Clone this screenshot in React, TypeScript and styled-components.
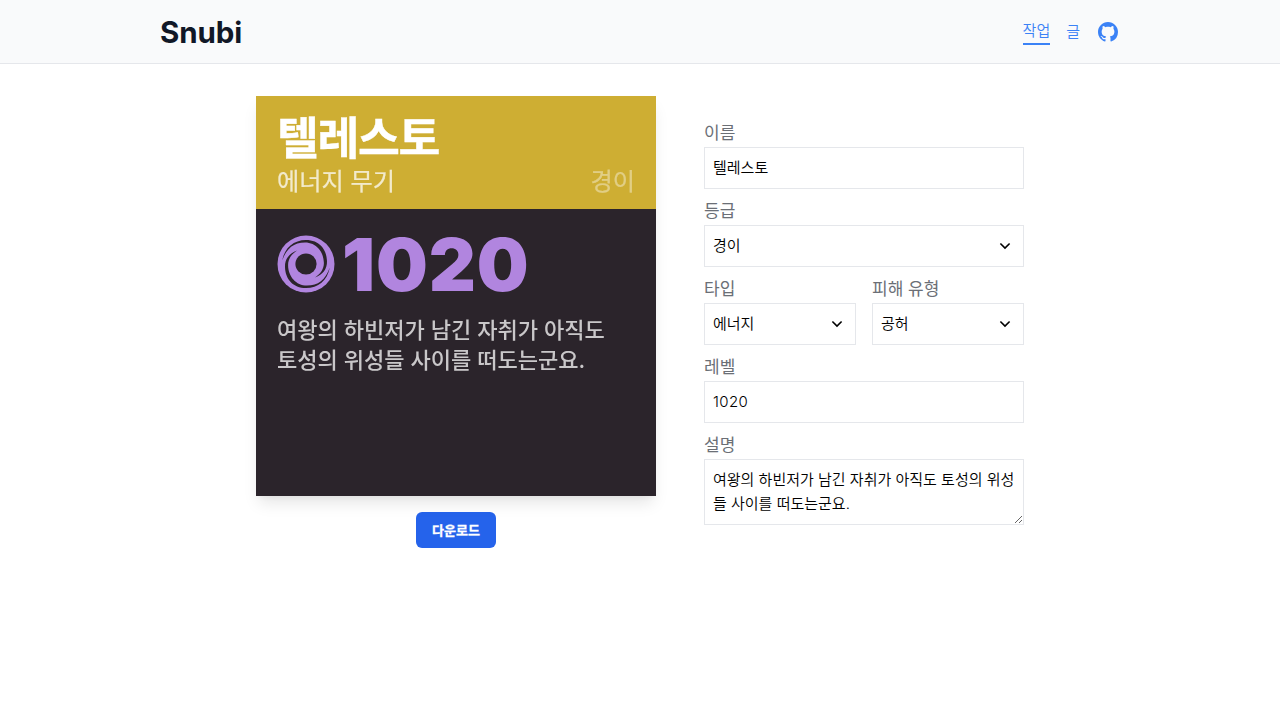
import React from "react";
import styled, { createGlobalStyle } from "styled-components";

const GlobalStyle = createGlobalStyle`
  *, *::before, *::after { box-sizing: border-box; }
  body { margin: 0; background: #fff; color: #000; font-family: Inter, "Noto Sans CJK KR", sans-serif; font-size: 16px; line-height: 24px; }
`;

const Header = styled.header`
  height: 64px;
  background: #f9fafb;
  border-bottom: 1px solid #e5e7eb;
`;
const HeaderInner = styled.div`
  width: 960px;
  height: 63px;
  margin: 0 auto;
  display: flex;
  align-items: center;
  justify-content: space-between;
`;
const Brand = styled.h1`
  margin: 0;
  color: #111827;
  font-size: 29.5px;
  line-height: 36px;
  font-weight: 700;
  letter-spacing: -0.1px;
`;
const Nav = styled.nav`
  display: flex;
  align-items: center;
  gap: 16px;
  padding-right: 2px;
`;
const NavLink = styled.a<{ $active?: boolean }>`
  color: #3b82f6;
  font-size: 15px;
  font-weight: 350;
  line-height: 24px;
  border-bottom: ${(p) => (p.$active ? "2px solid #3b82f6" : "0")};
`;
const GithubIcon = styled.svg`
  display: block;
  width: 20px;
  height: 20px;
  margin-left: 2px;
  fill: #3b82f6;
`;

const Main = styled.main`
  width: 768px;
  margin: 32px auto 0;
  display: flex;
  gap: 48px;
`;
const Preview = styled.section`
  width: 400px;
  display: flex;
  flex-direction: column;
  align-items: center;
  gap: 16px;
`;
const Card = styled.article`
  width: 400px;
  height: 400px;
  background: #2b242b;
  box-shadow: 0 10px 15px -3px rgba(0, 0, 0, 0.1), 0 4px 6px -2px rgba(0, 0, 0, 0.05);
  will-change: transform;
`;
const CardTop = styled.div`
  height: 113px;
  padding: 15px 21px 0 21px;
  background: #ceae33;
  color: #fff;
`;
const ItemName = styled.h2`
  margin: 0;
  font-size: 45.5px;
  line-height: 56px;
  font-weight: 700;
  letter-spacing: -1.4px;
  -webkit-text-stroke: 0.4px #fff;
`;
const ItemMeta = styled.div`
  display: flex;
  justify-content: space-between;
  font-size: 24.2px;
  font-weight: 400;
  line-height: 30px;
  -webkit-text-stroke: 0.2px #fff;
`;
const ItemType = styled.span`
  opacity: 0.75;
`;
const ItemTier = styled.span`
  opacity: 0.4;
`;
const Power = styled.div`
  height: 110px;
  padding: 0 21px;
  display: flex;
  align-items: center;
  gap: 7px;
  color: #b185df;
  font-size: 73px;
  line-height: 80px;
  font-weight: 900;
  letter-spacing: 0.9px;
`;
const PowerValue = styled.span`
  padding-top: 2px;
`;
const VoidIcon = styled.svg`
  width: 58px;
  height: 58px;
  flex: none;
`;
const Flavor = styled.p`
  margin: -3px 0 0;
  padding: 0 21px;
  color: #c9c7c9;
  font-size: 22.05px;
  font-weight: 500;
  line-height: 29.5px;
  word-break: keep-all;
`;
const Download = styled.button`
  width: 80px;
  height: 36px;
  border: 0;
  border-radius: 6px;
  padding: 0 0 1px;
  background: #2563eb;
  color: #fff;
  font: 700 13px/20px Inter, "Noto Sans CJK KR", sans-serif;
  -webkit-text-stroke: 0.3px #fff;
`;

const Form = styled.form`
  width: 320px;
  padding-top: 23px;
  display: flex;
  flex-direction: column;
  gap: 8px;
`;
const Pair = styled.div`
  display: grid;
  grid-template-columns: 1fr 1fr;
  gap: 16px;
`;
const Field = styled.label`
  display: block;
  color: #6b6f76;
`;
const Caption = styled.span`
  display: block;
  height: 28px;
  font-size: 17px;
  line-height: 28px;
`;
const controlFont = `350 15px/24px Inter, "Noto Sans CJK KR", sans-serif`;
const Input = styled.input<{ $numeric?: boolean }>`
  display: block;
  width: 100%;
  height: 42px;
  padding: ${(p) => (p.$numeric ? "7px 8px 9px" : "6px 8px 10px")};
  border: 1px solid #e5e7eb;
  border-radius: 0;
  background: #fff;
  color: #000;
  font: ${controlFont};
  letter-spacing: ${(p) => (p.$numeric ? "0.4px" : "normal")};
  outline: 0;
`;
const SelectBox = styled.span`
  display: flex;
  align-items: center;
  justify-content: space-between;
  height: 42px;
  padding: 0 12px 0 8px;
  border: 1px solid #e5e7eb;
  color: #000;
  font: ${controlFont};
`;
const Chevron = styled.svg`
  width: 12px;
  height: 8px;
`;
const TextArea = styled.textarea`
  display: block;
  width: 100%;
  height: 66px;
  padding: 8px;
  border: 1px solid #e5e7eb;
  background: #fff;
  color: #000;
  font: ${controlFont};
  resize: both;
  overflow: auto;
  outline: 0;
`;

function Select({ value }: { value: string }) {
  return (
    <SelectBox>
      {value}
      <Chevron viewBox="0 0 12 8" fill="none" stroke="#000" strokeWidth="1.6">
        <path d="M1.4 1.5 6 6.1l4.6-4.6" />
      </Chevron>
    </SelectBox>
  );
}

const crescent =
  "M5.2 25.5C7.5 12.5 17 4.9 29 4.9C42 4.9 49.8 14 50 26C50.2 34 46 39.5 38 42.5C43.5 39 46.9 34 46.9 28C46.9 16.5 39 7.4 28 7.4C17 7.4 9.5 13 5.2 25.5Z";

const flavor = "여왕의 하빈저가 남긴 자취가 아직도 토성의 위성들 사이를 떠도는군요.";

export default function App() {
  return (
    <>
      <GlobalStyle />
      <Header>
        <HeaderInner>
          <Brand>Snubi</Brand>
          <Nav>
            <NavLink $active>작업</NavLink>
            <NavLink>글</NavLink>
            <GithubIcon viewBox="0 0 16 16">
              <path d="M8 0C3.58 0 0 3.58 0 8c0 3.54 2.29 6.53 5.47 7.59.4.07.55-.17.55-.38 0-.19-.01-.82-.01-1.49-2.01.37-2.53-.49-2.69-.94-.09-.23-.48-.94-.82-1.13-.28-.15-.68-.52-.01-.53.63-.01 1.08.58 1.23.82.72 1.21 1.87.87 2.33.66.07-.52.28-.87.51-1.07-1.78-.2-3.64-.89-3.64-3.95 0-.87.31-1.59.82-2.15-.08-.2-.36-1.02.08-2.12 0 0 .67-.21 2.2.82.64-.18 1.32-.27 2-.27s1.36.09 2 .27c1.53-1.04 2.2-.82 2.2-.82.44 1.1.16 1.92.08 2.12.51.56.82 1.27.82 2.15 0 3.07-1.87 3.75-3.65 3.95.29.25.54.73.54 1.48 0 1.07-.01 1.93-.01 2.2 0 .21.15.46.55.38A8.01 8.01 0 0 0 16 8c0-4.42-3.58-8-8-8Z" />
            </GithubIcon>
          </Nav>
        </HeaderInner>
      </Header>
      <Main>
        <Preview>
          <Card>
            <CardTop>
              <ItemName>텔레스토</ItemName>
              <ItemMeta>
                <ItemType>에너지 무기</ItemType>
                <ItemTier>경이</ItemTier>
              </ItemMeta>
            </CardTop>
            <Power>
              <VoidIcon viewBox="0 0 58 58">
                <circle cx="29" cy="29" r="28.5" fill="currentColor" />
                <g fill="#2b242b">
                  <circle cx="29" cy="29" r="10.6" />
                  <path d={crescent} />
                  <path d={crescent} transform="rotate(180 29 29)" />
                </g>
              </VoidIcon>
              <PowerValue>1020</PowerValue>
            </Power>
            <Flavor>{flavor}</Flavor>
          </Card>
          <Download>다운로드</Download>
        </Preview>
        <Form>
          <Field><Caption>이름</Caption><Input defaultValue="텔레스토" /></Field>
          <Field><Caption>등급</Caption><Select value="경이" /></Field>
          <Pair>
            <Field><Caption>타입</Caption><Select value="에너지" /></Field>
            <Field><Caption>피해 유형</Caption><Select value="공허" /></Field>
          </Pair>
          <Field><Caption>레벨</Caption><Input $numeric defaultValue="1020" /></Field>
          <Field><Caption>설명</Caption><TextArea defaultValue={flavor} /></Field>
        </Form>
      </Main>
    </>
  );
}
